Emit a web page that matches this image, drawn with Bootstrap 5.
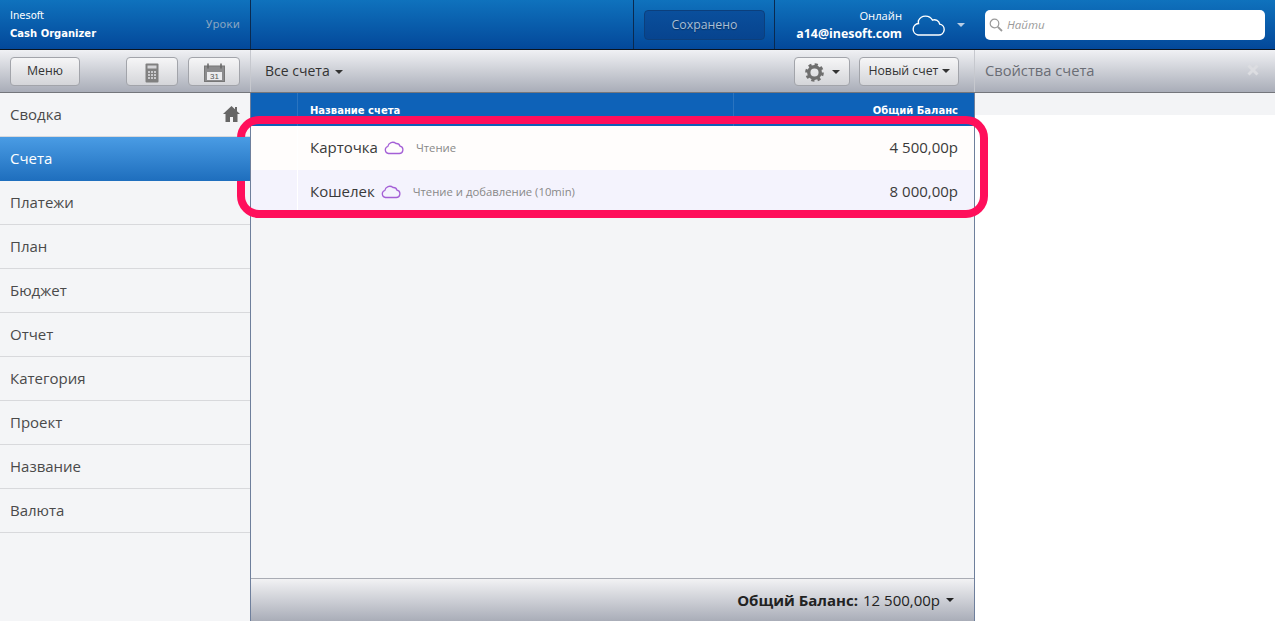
<!DOCTYPE html>
<html lang="ru">
<head>
  <meta charset="UTF-8" />
  <meta name="viewport" content="width=device-width, initial-scale=1.0" />
  <title>Cash Organizer</title>
  <link href="https://cdn.jsdelivr.net/npm/bootstrap@5.3.0/dist/css/bootstrap.min.css" rel="stylesheet" />
  <style>
    html, body { height: 100%; overflow: hidden; }
    body { font-family: "Open Sans", "Noto Sans", sans-serif; font-size: 14px; color: #3a3a3a; background: #fff; }
    .app-shell { height: 621px; position: relative; }

    .top-bar { height: 50px; background: linear-gradient(#0f72bd, #03489a); border-bottom: 1px solid #0a1420; color: #fff; }
    .brand-cell { width: 251px; border-right: 1px solid #0a2a50; padding: 0 10px; font-family: "DejaVu Sans", sans-serif; font-size: 10px; }
    .brand-name { line-height: 18px; }
    .brand-name b { font-size: 10px; }
    .lessons { color: #86a3c0; font-size: 11px; padding-top: 2px; }
    .saved-cell { width: 142px; border-left: 1px solid #0a2a50; border-right: 1px solid #0a2a50; padding: 10px; }
    .saved-box { height: 30px; width: 121px; background: linear-gradient(#0a4f9c, #07448f); border: 1px solid #0c3f7c; border-radius: 4px; color: #a9bfd6; font-size: 12.3px; line-height: 28px; text-align: center; text-shadow: 0 1px 1px #06305f; }
    .account-cell { width: 200px; padding-right: 10px; }
    .account-text { text-align: right; line-height: 18px; font-size: 11.2px; margin-right: 9px; }
    .account-text b { font-size: 12.4px; }
    .caret-down { display: inline-block; border-style: solid; border-width: 4px 4px 0; border-color: currentColor transparent transparent; }
    .account-caret { margin-left: 12px; color: #b9cde4; }
    .search-cell { width: 300px; padding: 10px; }
    .search-box { height: 30px; background: #fff; border-radius: 5px; color: #9a9a9a; font-style: italic; font-size: 11.5px; padding-left: 4px; gap: 4px; }

    .tool-bar { height: 43px; background: linear-gradient(#f0f1f4, #a9adb8); border-bottom: 1px solid #74767c; }
    .tool-left { width: 251px; padding: 7px 10px; border-right: 1px solid #c6c8ce; }
    .icon-btns { gap: 10px; }
    .tool-mid { width: 724px; padding: 7px 15px 7px 14px; border-right: 1px solid #c6c8ce; }
    .tool-btns { gap: 9px; }
    .tool-right { width: 300px; padding: 0 16px 2px 10px; color: #6a6d75; font-size: 14.7px; }
    .gray-btn { height: 29px; padding: 0 0 2px; font-size: 12.3px; color: #333; line-height: 25px; border: 1px solid #a2a4aa; border-radius: 4px; background: linear-gradient(#f6f6f7, #d4d5d9); }
    .btn-menu { width: 70px; }
    .btn-icon { width: 52px; padding: 0; }
    .btn-gear { width: 56px; padding: 0; }
    .btn-new { width: 100px; }
    .all-accounts { font-size: 14px; color: #333; padding-bottom: 2px; }
    .all-accounts .caret-down { margin-left: 2px; }

    .main-area { height: 528px; }
    .side-col { width: 251px; background: #f4f5f7; border-right: 1px solid #6e7f9c; }
    .side-list .list-group-item { height: 44px; padding: 0 10px; margin: 0; font-size: 15px; line-height: 42px; color: #4a4a4a; background: transparent; border-width: 0 0 1px; border-color: #d8d9dc; border-radius: 0; }
    .side-list .list-group-item.active { margin-top: 0; border-top-width: 0; color: #fff; background: linear-gradient(#4a9ce4, #1f6fbe); border-color: #1f6fbe; }
    .side-list .summary-item { padding-bottom: 1px; }

    .mid-col { width: 724px; background: #f4f5f7; border-right: 1px solid #6e7f9c; }
    .head-row { height: 33px; background: #0e62b8; color: #fff; font-family: "DejaVu Sans", sans-serif; font-size: 10px; font-weight: 700; }
    .head-row > div, .acc-row > div { height: 100%; }
    .cell-mark { width: 47px; }
    .head-row .cell-mark { border-right: 1px solid #2a74c0; }
    .head-row .cell-name { width: 437px; padding-left: 12px; border-right: 1px solid #2a74c0; line-height: 36px; }
    .head-row .cell-sum { width: 240px; padding-right: 16px; text-align: right; line-height: 36px; }
    .acc-row { height: 44px; font-size: 15px; }
    .acc-row.odd { background: #fffdfc; }
    .acc-row.even { background: #f4f3fd; }
    .acc-row .cell-mark { border-right: 1px solid #fff; }
    .acc-row .cell-name { flex: 1; padding: 0 0 1px 12px; gap: 6px; }
    .acc-row .cell-sum { padding: 0 16px 1px 0; }
    .access-note { color: #888; font-size: 11.3px; margin-left: 6px; padding-top: 1px; }
    .mid-spacer { flex: 1; }
    .total-bar { height: 43px; background: linear-gradient(#f2f2f4, #a9adb8); border-top: 1px solid #a9acb4; padding-right: 20px; font-size: 15px; color: #222; gap: 5px; }
    .total-bar .caret-down { margin-left: 1px; }

    .right-col { width: 300px; background: #fff; }
    .right-strip { height: 22px; background: #f3f4f6; }

    .pink-frame { position: absolute; left: 237px; top: 116px; width: 751px; height: 102px; border: 8px solid #ff0f5b; border-radius: 22px; pointer-events: none; }
  </style>
</head>
<body>
  <div class="app-shell">
    <div class="top-bar d-flex">
      <div class="brand-cell d-flex justify-content-between align-items-center">
        <div class="brand-name">Inesoft<br /><b>Cash Organizer</b></div>
        <span class="lessons">Уроки</span>
      </div>
      <div class="flex-grow-1"></div>
      <div class="saved-cell"><div class="saved-box">Сохранено</div></div>
      <div class="account-cell d-flex justify-content-end align-items-center">
        <div class="account-text">Онлайн<br /><b>a14@inesoft.com</b></div>
        <svg width="34" height="24" viewBox="0 0 34 24" fill="none" stroke="#fff" stroke-width="1.4">
          <path d="M7 22H27.500a5.500 5.500 0 0 0 1.200-10.900 5.500 5.500 0 0 0-7.200-4A8 8 0 0 0 7.500 7.500 7.200 7.200 0 0 0 7.500 10.500 5.800 5.800 0 0 0 7 22z" />
        </svg>
        <span class="caret-down account-caret"></span>
      </div>
      <div class="search-cell">
        <div class="search-box d-flex align-items-center">
          <svg width="14" height="14" viewBox="0 0 14 14" fill="none" stroke="#9a9a9a" stroke-width="1.2">
            <circle cx="5.500" cy="5.500" r="4.300" /><path d="M8.800 8.800l4.200 4.200" stroke-width="1.800" />
          </svg>
          <span>Найти</span>
        </div>
      </div>
    </div>

    <div class="tool-bar d-flex">
      <div class="tool-left d-flex justify-content-between">
        <button class="btn gray-btn btn-menu">Меню</button>
        <div class="d-flex icon-btns">
          <button class="btn gray-btn btn-icon">
            <svg width="14" height="20" viewBox="0 0 14 20"><rect x=".5" y=".5" width="13" height="19" rx="1" fill="#808080" /><rect x="2.500" y="2.500" width="9" height="3" fill="#d5d5d8" /><path d="M3 8h2v2H3zM6 8h2v2H6zM9 8h2v2H9zM3 11h2v2H3zM6 11h2v2H6zM9 11h2v2H9zM3 14h2v2H3zM6 14h2v2H6zM9 14h2v2H9z" fill="#c9c9cc" /></svg>
          </button>
          <button class="btn gray-btn btn-icon">
            <svg width="21" height="19" viewBox="0 0 21 19"><rect x=".5" y="3" width="20" height="15.500" fill="#8c8c8e" stroke="#777" /><rect x="3" y="9" width="15" height="8" fill="#ececee" /><path d="M4 .5v5M17 .5v5" stroke="#666" stroke-width="1.500" /><text x="10.500" y="16" text-anchor="middle" font-size="8" fill="#555" font-family="Liberation Sans">31</text></svg>
          </button>
        </div>
      </div>
      <div class="tool-mid d-flex align-items-center">
        <span class="all-accounts">Все счета <span class="caret-down align-middle"></span></span>
        <div class="ms-auto d-flex tool-btns">
          <button class="btn gray-btn btn-gear">
            <svg class="align-middle" width="21" height="21" viewBox="0 0 22 22" fill="none"><circle cx="11" cy="11" r="6" stroke="#6f6f6f" stroke-width="3.500" /><circle cx="11" cy="11" r="8.300" stroke="#6f6f6f" stroke-width="3" stroke-dasharray="3.300 3.200" /></svg>
            <span class="caret-down ms-1 align-middle"></span>
          </button>
          <button class="btn gray-btn btn-new">Новый счет <span class="caret-down align-middle"></span></button>
        </div>
      </div>
      <div class="tool-right d-flex justify-content-between align-items-center">
        <span>Свойства счета</span>
        <svg width="12" height="12" viewBox="0 0 12 12"><path d="M1.500 1.500l9 9M10.500 1.500l-9 9" stroke="#dcdde1" stroke-width="3" /></svg>
      </div>
    </div>

    <div class="main-area d-flex">
      <div class="side-col">
        <div class="list-group side-list">
          <a class="list-group-item summary-item d-flex justify-content-between align-items-center" href="#">Сводка
            <svg width="17" height="16" viewBox="0 0 17 16"><path d="M8.500 0L0 8h2.500v8h4.500v-5h3v5h4.500V8H17l-3-2.800V1h-2v2.300z" fill="#666" /></svg>
          </a>
          <a class="list-group-item active" href="#">Счета</a>
          <a class="list-group-item" href="#">Платежи</a>
          <a class="list-group-item" href="#">План</a>
          <a class="list-group-item" href="#">Бюджет</a>
          <a class="list-group-item" href="#">Отчет</a>
          <a class="list-group-item" href="#">Категория</a>
          <a class="list-group-item" href="#">Проект</a>
          <a class="list-group-item" href="#">Название</a>
          <a class="list-group-item" href="#">Валюта</a>
        </div>
      </div>

      <div class="mid-col d-flex flex-column">
        <div class="head-row d-flex">
          <div class="cell-mark"></div>
          <div class="cell-name">Название счета</div>
          <div class="cell-sum">Общий Баланс</div>
        </div>
        <div class="acc-row odd d-flex">
          <div class="cell-mark"></div>
          <div class="cell-name d-flex align-items-center">
            <span>Карточка</span>
            <svg width="20" height="15" viewBox="0 0 20 15" fill="none" stroke="#a45fd6" stroke-width="1.300"><path d="M4.500 13.500h10.500a3.700 3.700 0 0 0 1-7.300 3.800 3.800 0 0 0-4-2.700A5 5 0 0 0 3.800 6.500a3.600 3.600 0 0 0 .7 7z" /></svg>
            <span class="access-note">Чтение</span>
          </div>
          <div class="cell-sum d-flex align-items-center">4 500,00р</div>
        </div>
        <div class="acc-row even d-flex">
          <div class="cell-mark"></div>
          <div class="cell-name d-flex align-items-center">
            <span>Кошелек</span>
            <svg width="20" height="15" viewBox="0 0 20 15" fill="none" stroke="#a45fd6" stroke-width="1.300"><path d="M4.500 13.500h10.500a3.700 3.700 0 0 0 1-7.300 3.800 3.800 0 0 0-4-2.700A5 5 0 0 0 3.800 6.500a3.600 3.600 0 0 0 .7 7z" /></svg>
            <span class="access-note">Чтение и добавление (10min)</span>
          </div>
          <div class="cell-sum d-flex align-items-center">8 000,00р</div>
        </div>
        <div class="mid-spacer"></div>
        <div class="total-bar d-flex justify-content-end align-items-center">
          <b>Общий Баланс:</b> <span>12 500,00р</span> <span class="caret-down"></span>
        </div>
      </div>

      <div class="right-col">
        <div class="right-strip"></div>
      </div>
    </div>

    <div class="pink-frame"></div>
  </div>
  <script src="https://cdn.jsdelivr.net/npm/bootstrap@5.3.0/dist/js/bootstrap.bundle.min.js"></script>
</body>
</html>
